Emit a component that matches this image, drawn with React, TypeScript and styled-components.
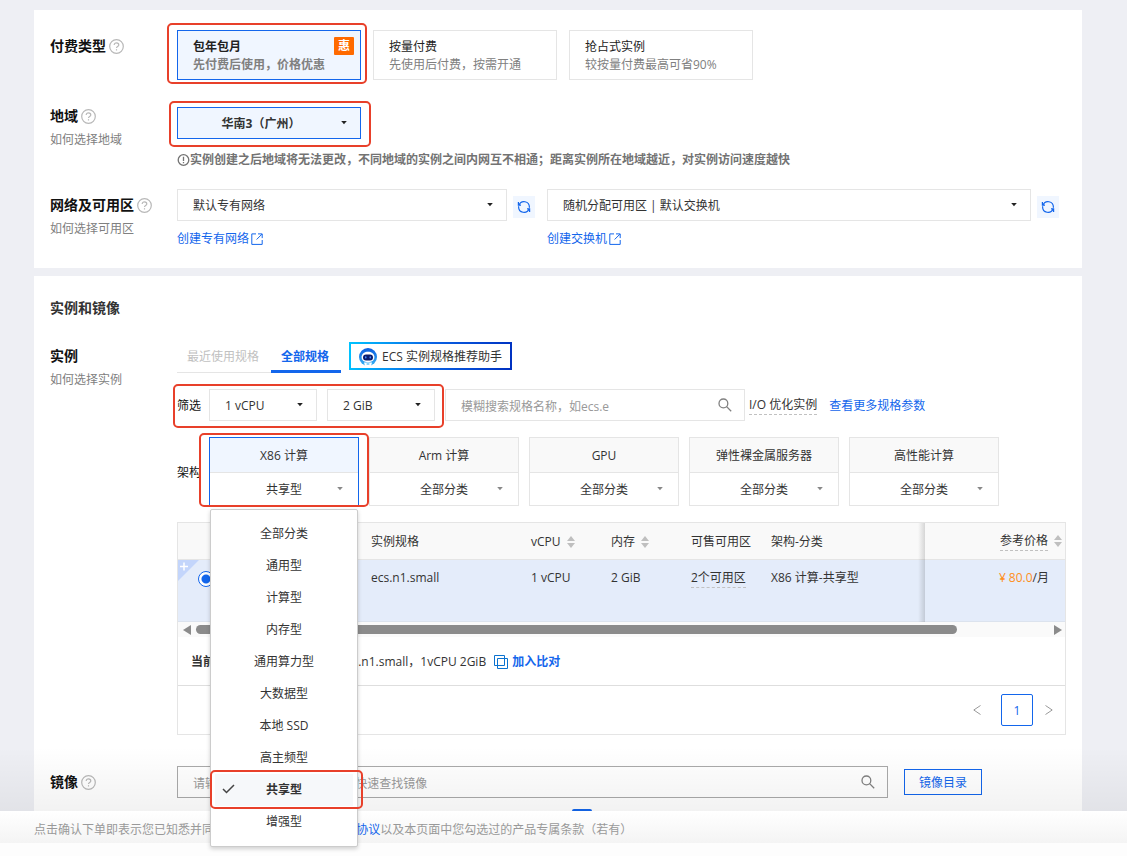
import React from "react";
import styled, { createGlobalStyle, css } from "styled-components";

const blue = "#1366ec";
const line = "#e5e5e5";
const red = "#e8402a";

const GlobalStyle = createGlobalStyle`
  *, *::before, *::after { box-sizing: border-box; }
  body {
    margin: 0;
    background: #eeeff4;
    color: #333;
    font-family: "Open Sans", "Noto Sans CJK SC", sans-serif;
    font-size: 12px;
    line-height: 20px;
  }
  button, input, select {
    font: inherit;
    color: inherit;
    border-radius: 0;
    margin: 0;
  }
  button { cursor: pointer; padding: 0; }
`;

const Page = styled.div`
  display: flex;
  flex-direction: column;
  min-height: 100vh;
`;

const Content = styled.main`
  display: flex;
  flex-direction: column;
  gap: 8px;
  padding: 10px 45px 0 34px;
`;

const Card = styled.section<{ $cut?: boolean }>`
  display: flex;
  flex-direction: column;
  gap: 20px;
  padding: ${(p) => (p.$cut ? "20px 16px 0" : "20px 16px")};
  background: #fff;
`;

const CardTitle = styled.h2`
  margin: 0;
  font-size: 14px;
  line-height: 24px;
  font-weight: 700;
`;

const Row = styled.div<{ $spaced?: boolean }>`
  display: grid;
  grid-template-columns: 127px minmax(0, 1fr);
  margin-top: ${(p) => (p.$spaced ? "11px" : "0")};
`;

const LabelCell = styled.div`
  padding-top: 6px;
`;

const LabelTitle = styled.div`
  display: flex;
  align-items: center;
  gap: 3px;
  font-size: 14px;
  font-weight: 700;
  color: #111;
`;

const LabelHint = styled.a`
  display: block;
  line-height: 28px;
  color: #808080;
  text-decoration: none;
`;

const Anchor = styled.div`
  position: relative;
  width: fit-content;
`;

const Ring = styled.span<{ $inset: string }>`
  position: absolute;
  inset: ${(p) => p.$inset};
  border: 2px solid ${red};
  border-radius: 5px;
  pointer-events: none;
  z-index: 3;
`;

const Options = styled.div`
  display: flex;
  gap: 12px;
`;

const Option = styled.button<{ $active?: boolean }>`
  position: relative;
  display: block;
  width: 184px;
  height: 50px;
  padding: 7px 15px 5px;
  text-align: left;
  line-height: 18px;
  background: #fff;
  border: 1px solid ${line};
  color: #222;
  ${(p) =>
    p.$active &&
    css`
      background: #f0f6ff;
      border-color: ${blue};
      font-weight: 700;
    `}
`;

const OptionNote = styled.span`
  display: block;
  color: #808080;
`;

const Badge = styled.span`
  position: absolute;
  top: 6px;
  right: 6px;
  width: 20px;
  border-radius: 1px;
  background: #ff6a00;
  color: #fff;
  text-align: center;
`;

const RegionField = styled.div`
  padding-top: 7px;
`;

const SelectBox = styled.div<{ $width?: number }>`
  position: relative;
  ${(p) => (p.$width ? `width: ${p.$width}px;` : "flex: 1;")}
`;

const Select = styled.select<{ $region?: boolean; $category?: boolean }>`
  appearance: none;
  display: block;
  width: 100%;
  height: 32px;
  padding: 2px 30px 0 15px;
  border: 1px solid ${line};
  background: #fff;
  outline: none;
  ${(p) =>
    p.$region &&
    css`
      padding: 2px 24px 0 8px;
      border-color: ${blue};
      background: #f0f6ff;
      font-weight: 700;
      text-align-last: center;
    `}
  ${(p) =>
    p.$category &&
    css`
      padding: 2px 0 0;
      border: 0;
      text-align-last: center;
    `}
`;

const Caret = styled.svg<{ $faint?: boolean }>`
  position: absolute;
  right: ${(p) => (p.$faint ? "14px" : "13px")};
  top: 50%;
  margin-top: -3px;
  width: 8px;
  height: 5px;
  fill: ${(p) => (p.$faint ? "#888" : "#222")};
  pointer-events: none;
`;

const Tip = styled.p`
  display: flex;
  align-items: center;
  margin: 12px 0 0;
  line-height: 18px;
  color: #737373;
  font-weight: 700;
`;

const NetworkFields = styled.div`
  display: grid;
  grid-template-columns: 358px minmax(0, 1fr);
  gap: 12px;
  padding-right: 7px;
`;

const FieldLine = styled.div`
  display: flex;
  align-items: center;
  gap: 6px;
`;

const RefreshButton = styled.button`
  display: flex;
  align-items: center;
  justify-content: center;
  width: 22px;
  height: 22px;
  margin-top: 4px;
  border: 0;
  background: #f0f6ff;
  color: ${blue};
`;

const Link = styled.a`
  color: ${blue};
  text-decoration: none;
`;

const CreateLink = styled(Link)`
  display: flex;
  align-items: center;
  gap: 2px;
  width: fit-content;
  margin-top: 9px;
  line-height: 18px;
`;

const SpecsLink = styled(Link)`
  padding-top: 2px;
`;

const TermsLink = styled(Link)`
  padding-left: 4px;
`;

const Tabs = styled.div`
  display: flex;
  height: 33px;
`;

const Tab = styled.button<{ $active?: boolean }>`
  padding: 1px 12px 0 10px;
  border: 0;
  background: none;
  color: ${(p) => (p.$active ? blue : "#c1c1c1")};
  font-weight: ${(p) => (p.$active ? 700 : 400)};
  box-shadow: inset 0 ${(p) => (p.$active ? `-3px ${blue}` : `-1px ${line}`)};
`;

const AssistantButton = styled.button`
  display: flex;
  align-items: center;
  gap: 5px;
  height: 28px;
  margin: 2px 0 0 8px;
  padding: 1px 8px 0;
  border: 2px solid transparent;
  background:
    linear-gradient(#fff, #fff) padding-box,
    linear-gradient(100deg, #00c4ff, #0a62e4 50%, #0030c0) border-box;
`;

const FilterLine = styled.div`
  display: flex;
  align-items: center;
  margin-top: 16px;
`;

const FilterGroup = styled(Anchor)`
  display: flex;
  align-items: center;
  gap: 10px;
`;

const FilterLabel = styled.span<{ $tight?: boolean }>`
  width: ${(p) => (p.$tight ? "22px" : "32px")};
  padding-top: 2px;
  color: #111;
  white-space: nowrap;
`;

const SearchBox = styled.label<{ $wide?: boolean }>`
  display: flex;
  align-items: center;
  height: 32px;
  padding: 0 12px 0 15px;
  background: #fff;
  border: 1px solid ${(p) => (p.$wide ? "#aaa" : line)};
  ${(p) => (p.$wide ? "flex: 0 1 711px;" : "width: 300px; margin: 0 4px 0 10px;")}
`;

const SearchInput = styled.input`
  flex: 1;
  min-width: 0;
  height: 30px;
  padding: 2px 0 0;
  border: 0;
  background: none;
  outline: none;
  &::placeholder { color: #999; opacity: 1; }
`;

const Dashed = styled.span<{ $right?: boolean }>`
  display: inline-block;
  line-height: 18px;
  border-bottom: 1px dashed #c1c1c1;
  margin-right: ${(p) => (p.$right ? "12px" : "0")};
`;

const ArchList = styled.div`
  display: flex;
  gap: 10px;
`;

const ArchCard = styled.div<{ $active?: boolean }>`
  position: relative;
  width: 150px;
  height: 69px;
  background: #fff;
  border: 1px solid ${(p) => (p.$active ? blue : line)};
`;

const ArchName = styled.button<{ $active?: boolean }>`
  display: block;
  width: 100%;
  height: 35px;
  padding-top: 2px;
  border: 0;
  border-bottom: 1px solid ${line};
  background: ${(p) => (p.$active ? "#f0f6ff" : "#f9f9f9")};
`;

const CategoryButton = styled.button`
  display: block;
  width: 100%;
  height: 32px;
  padding-top: 2px;
  border: 0;
  background: none;
`;

const Menu = styled.ul`
  position: absolute;
  top: 71px;
  left: 0;
  width: 148px;
  margin: 0;
  padding: 8px 0;
  list-style: none;
  background: #fff;
  border: 1px solid #ccc;
  border-radius: 2px;
  box-shadow: 0 2px 4px rgba(0, 0, 0, 0.18);
  z-index: 5;
`;

const MenuItem = styled.li<{ $active?: boolean }>`
  position: relative;
  margin: 0 4px;
  line-height: 32px;
  text-align: center;
  background: ${(p) => (p.$active ? "#f6f8fa" : "transparent")};
  font-weight: ${(p) => (p.$active ? 700 : 400)};
`;

const CheckMark = styled.svg`
  position: absolute;
  left: 7px;
  top: 9px;
  fill: none;
  stroke: #444;
`;

const TablePanel = styled.div`
  margin-top: 16px;
  border: 1px solid ${line};
`;

const Table = styled.table`
  width: 100%;
  table-layout: fixed;
  border-collapse: separate;
  border-spacing: 0;
`;

const HeadCell = styled.th`
  height: 37px;
  padding: 2px 10px 0;
  text-align: left;
  font-weight: 400;
  background: #f9f9f9;
  border-bottom: 1px solid ${line};
`;

const Cell = styled.td`
  position: relative;
  height: 62px;
  padding: 8px 10px;
  vertical-align: top;
  background: #e4ecfa;
  border-bottom: 1px solid #dce3ee;
`;

const pinned = css`
  position: relative;
  text-align: right;
  &::before {
    content: "";
    position: absolute;
    top: 0;
    bottom: -1px;
    left: -7px;
    width: 7px;
    background: linear-gradient(to right, transparent, rgba(0, 0, 0, 0.14));
  }
`;

const PinnedHead = styled(HeadCell)`
  ${pinned}
  padding: 0 3px 0 10px;
`;

const PinnedCell = styled(Cell)`
  ${pinned}
  padding-right: 16px;
`;

const HeadInner = styled.span<{ $end?: boolean }>`
  display: flex;
  align-items: center;
  gap: 6px;
  justify-content: ${(p) => (p.$end ? "flex-end" : "flex-start")};
`;

const Price = styled.span`
  color: #ff8f1a;
`;

const Corner = styled.svg`
  position: absolute;
  left: 0;
  top: 0;
`;

const Radio = styled.input`
  appearance: none;
  display: block;
  width: 16px;
  height: 16px;
  margin: 3px 0 0 10px;
  border: 1px solid ${blue};
  border-radius: 50%;
  background: radial-gradient(circle, ${blue} 4px, #fff 5px);
`;

const ScrollBar = styled.div`
  display: flex;
  align-items: center;
  height: 15px;
  background: #fafafa;
`;

const ScrollArrow = styled.span<{ $end?: boolean }>`
  display: flex;
  justify-content: center;
  width: ${(p) => (p.$end ? "14px" : "18px")};
`;

const ScrollTrack = styled.div`
  flex: 1;
`;

const ScrollThumb = styled.div`
  width: 89%;
  height: 9px;
  border-radius: 5px;
  background: #8b8b8b;
`;

const Summary = styled.div`
  display: flex;
  align-items: center;
  height: 49px;
  padding: 2px 13px 0;
  border-bottom: 1px solid #dedede;
`;

const SummaryLabel = styled.span`
  width: 149px;
  font-weight: 700;
`;

const CompareButton = styled.button`
  display: flex;
  align-items: center;
  gap: 4px;
  margin-left: 8px;
  border: 0;
  background: none;
  color: ${blue};
  font-weight: 700;
`;

const Pagination = styled.nav`
  display: flex;
  align-items: center;
  justify-content: flex-end;
  height: 48px;
`;

const PageArrow = styled.button`
  display: flex;
  align-items: center;
  justify-content: center;
  width: 32px;
  height: 32px;
  border: 0;
  background: none;
  color: #999;
`;

const PageNumber = styled.button`
  width: 32px;
  height: 32px;
  margin-left: 8px;
  padding-top: 2px;
  border: 1px solid ${blue};
  border-radius: 2px;
  background: #fff;
  color: ${blue};
`;

const ImageLine = styled.div`
  display: flex;
  align-items: center;
  gap: 16px;
`;

const OutlineButton = styled.button`
  flex: none;
  width: 78px;
  height: 26px;
  padding-top: 2px;
  border: 1px solid ${blue};
  background: #fff;
  color: ${blue};
`;

const NextTabs = styled.div`
  display: flex;
  justify-content: center;
  width: 100%;
  max-width: 810px;
  margin-top: 11px;
`;

const TabIndicator = styled.span`
  width: 20px;
  height: 2px;
  border-radius: 2px 2px 0 0;
  background: ${blue};
`;

const Footer = styled.footer`
  position: relative;
  flex: 1;
  padding-bottom: 13px;
  background: #fdfdfd;
  z-index: 1;
  &::before {
    content: "";
    position: absolute;
    left: 0;
    right: 0;
    bottom: 100%;
    height: 64px;
    background: linear-gradient(transparent, rgba(0, 0, 0, 0.05));
    pointer-events: none;
  }
`;

const Agreement = styled.p`
  margin: 0;
  padding: 5px 34px 0;
  line-height: 27px;
  color: #999;
  background: linear-gradient(#fff, #f4f4f4);
`;

const HelpIcon = () => (
  <svg width="15" height="15" viewBox="0 0 15 15" fill="none" stroke="#b8b8b8" strokeWidth="1.2" aria-hidden="true">
    <circle cx="7.5" cy="7.5" r="6.8" />
    <path d="M5.2 6c0-1.300 1-2.200 2.300-2.200s2.300.9 2.300 2.100c0 1.600-2.300 1.700-2.300 3.200" />
    <path d="M7.5 10.200v1.300" />
  </svg>
);

const InfoIcon = () => (
  <svg width="13" height="13" viewBox="0 0 13 13" fill="none" stroke="#737373" strokeWidth="1.3" aria-hidden="true">
    <circle cx="6.5" cy="6" r="5.3" />
    <path d="M6.5 2.800v4.200M6.5 8v1.300" />
  </svg>
);

const ExternalIcon = () => (
  <svg width="12" height="12" viewBox="0 0 12 12" fill="none" stroke={blue} aria-hidden="true">
    <path d="M5 .9H.8v10.5h10.4V7" />
    <path d="M7 .9h4.2v4.2M11 1.1 5.6 6.5" />
  </svg>
);

const RefreshIcon = () => (
  <svg width="14" height="14" viewBox="0 0 14 14" fill="none" stroke="currentColor" strokeWidth="1.2" aria-hidden="true">
    <path d="M2 5A5.400 5.400 0 0 1 12.400 7v.8M12 9A5.400 5.400 0 0 1 1.600 7v-.8" />
    <path d="M1.400 2v3.200h2.600M12.600 12V8.800H10" />
  </svg>
);

const SearchIcon = () => (
  <svg width="14" height="14" viewBox="0 0 14 14" fill="none" stroke="#808080" strokeWidth="1.3" aria-hidden="true">
    <circle cx="5.4" cy="5.4" r="4.4" />
    <path d="m8.6 8.6 4.6 4.6" />
  </svg>
);

const RobotIcon = () => (
  <svg width="18" height="18" viewBox="0 0 18 18" aria-hidden="true">
    <defs>
      <linearGradient id="robotRing" x1="0" y1="0" x2="0" y2="1">
        <stop offset="0" stopColor="#0a5be0" />
        <stop offset="1" stopColor="#39b6f5" />
      </linearGradient>
    </defs>
    <circle cx="9" cy="9" r="9" fill="url(#robotRing)" />
    <path d="M2.6 8.6C3 5.4 5.7 3.8 9 3.8s6 1.6 6.4 4.8c.3 3.6-2.2 5.6-6.4 5.6s-6.7-2-6.4-5.6Z" fill="#fff" />
    <path d="M5 14.600h8l-1 3.400H6z" fill="#fff" />
    <rect x="4" y="6.400" width="10" height="6" rx="3" fill="#0a1c6e" />
    <rect x="6" y="8.200" width="1.500" height="2.300" rx=".7" fill="#3f8cff" />
    <rect x="10.500" y="8.200" width="1.500" height="2.300" rx=".7" fill="#3f8cff" />
    <path d="M7.600 16h2.800" stroke="#39b6f5" strokeWidth="1.200" />
  </svg>
);

const SortIcon = () => (
  <svg width="8" height="12" viewBox="0 0 8 12" fill="#bfbfbf" aria-hidden="true">
    <path d="M4 0 8 5H0zM4 12 0 7h8z" />
  </svg>
);

const CompareIcon = () => (
  <svg width="14" height="14" viewBox="0 0 14 14" fill="none" stroke="#0a72d0" aria-hidden="true">
    <path d="M.5.5h10v10H.5zM3.5 3.5h10v10h-10z" />
  </svg>
);

const Down = ({ faint }: { faint?: boolean }) => (
  <Caret $faint={faint} viewBox="0 0 8 5" aria-hidden="true">
    <path d="M1.2 1h5.600L4 4.200z" />
  </Caret>
);

type LabelProps = { title: string; hint?: string; help?: boolean };
const Label = ({ title, hint, help }: LabelProps) => (
  <LabelCell>
    <LabelTitle>
      {title}
      {help && <HelpIcon />}
    </LabelTitle>
    {hint && <LabelHint href="#help">{hint}</LabelHint>}
  </LabelCell>
);

type PickerProps = { label: string; value: string; width?: number; region?: boolean };
const Picker = ({ label, value, width, region }: PickerProps) => (
  <SelectBox $width={width}>
    <Select aria-label={label} $region={region} defaultValue={value}>
      <option>{value}</option>
    </Select>
    <Down />
  </SelectBox>
);

const architectures = ["Arm 计算", "GPU", "弹性裸金属服务器", "高性能计算"];
const categories = ["全部分类", "通用型", "计算型", "内存型", "通用算力型", "大数据型", "本地 SSD", "高主频型", "共享型", "增强型"];

export default function App() {
  return (
    <Page>
      <GlobalStyle />
      <Content>
        <Card>
          <Row>
            <Label title="付费类型" help />
            <Options>
              <Anchor>
                <Option type="button" $active aria-pressed="true">
                  包年包月
                  <OptionNote>先付费后使用，价格优惠</OptionNote>
                  <Badge>惠</Badge>
                </Option>
                <Ring $inset="-7px -6px -4px -10px" />
              </Anchor>
              <Option type="button">
                按量付费
                <OptionNote>先使用后付费，按需开通</OptionNote>
              </Option>
              <Option type="button">
                抢占式实例
                <OptionNote>较按量付费最高可省90%</OptionNote>
              </Option>
            </Options>
          </Row>
          <Row>
            <Label title="地域" hint="如何选择地域" help />
            <RegionField>
              <Anchor>
                <Picker label="地域" value="华南3（广州）" width={184} region />
                <Ring $inset="-6px -10px -8px -8px" />
              </Anchor>
              <Tip>
                <InfoIcon />
                实例创建之后地域将无法更改，不同地域的实例之间内网互不相通；距离实例所在地域越近，对实例访问速度越快
              </Tip>
            </RegionField>
          </Row>
          <Row>
            <Label title="网络及可用区" hint="如何选择可用区" help />
            <NetworkFields>
              <div>
                <FieldLine>
                  <Picker label="专有网络" value="默认专有网络" />
                  <RefreshButton type="button" aria-label="刷新专有网络"><RefreshIcon /></RefreshButton>
                </FieldLine>
                <CreateLink href="#vpc">创建专有网络<ExternalIcon /></CreateLink>
              </div>
              <div>
                <FieldLine>
                  <Picker label="交换机" value="随机分配可用区 | 默认交换机" />
                  <RefreshButton type="button" aria-label="刷新交换机"><RefreshIcon /></RefreshButton>
                </FieldLine>
                <CreateLink href="#vswitch">创建交换机<ExternalIcon /></CreateLink>
              </div>
            </NetworkFields>
          </Row>
        </Card>

        <Card $cut>
          <CardTitle>实例和镜像</CardTitle>
          <Row>
            <Label title="实例" hint="如何选择实例" />
            <div>
              <Tabs>
                <Tab type="button">最近使用规格</Tab>
                <Tab type="button" $active>全部规格</Tab>
                <AssistantButton type="button"><RobotIcon />ECS 实例规格推荐助手</AssistantButton>
              </Tabs>
              <FilterLine>
                <FilterGroup>
                  <FilterLabel $tight>筛选</FilterLabel>
                  <Picker label="vCPU" value="1 vCPU" width={108} />
                  <Picker label="内存" value="2 GiB" width={108} />
                  <Ring $inset="-5px -9px -7px -4px" />
                </FilterGroup>
                <SearchBox>
                  <SearchInput type="text" aria-label="搜索规格" placeholder="模糊搜索规格名称，如ecs.e" />
                  <SearchIcon />
                </SearchBox>
                <Dashed $right>I/O 优化实例</Dashed>
                <SpecsLink href="#specs">查看更多规格参数</SpecsLink>
              </FilterLine>
              <FilterLine>
                <FilterLabel>架构</FilterLabel>
                <ArchList>
                  <ArchCard $active>
                    <ArchName type="button" $active>X86 计算</ArchName>
                    <SelectBox>
                      <CategoryButton type="button" aria-haspopup="listbox" aria-expanded="true">共享型</CategoryButton>
                      <Down faint />
                    </SelectBox>
                    <Ring $inset="-5px -11px -2px -11px" />
                    <Menu role="listbox" aria-label="X86 计算分类">
                      {categories.map((name) => {
                        const active = name === "共享型";
                        return (
                          <MenuItem key={name} role="option" aria-selected={active} $active={active}>
                            {active && (
                              <CheckMark width="13" height="12" viewBox="0 0 13 12" strokeWidth="1.5" aria-hidden="true">
                                <path d="m1 6 3.5 3.5L12 2" />
                              </CheckMark>
                            )}
                            {name}
                            {active && <Ring $inset="-4px -10px -3px -5px" />}
                          </MenuItem>
                        );
                      })}
                    </Menu>
                  </ArchCard>
                  {architectures.map((name) => (
                    <ArchCard key={name}>
                      <ArchName type="button">{name}</ArchName>
                      <SelectBox>
                        <Select aria-label={`${name}分类`} $category defaultValue="全部分类">
                          <option>全部分类</option>
                        </Select>
                        <Down faint />
                      </SelectBox>
                    </ArchCard>
                  ))}
                </ArchList>
              </FilterLine>
              <TablePanel>
                <Table>
                  <colgroup>
                    <col width="183" />
                    <col width="160" />
                    <col width="80" />
                    <col width="80" />
                    <col width="80" />
                    <col />
                    <col width="140" />
                  </colgroup>
                  <thead>
                    <tr>
                      <HeadCell />
                      <HeadCell>实例规格</HeadCell>
                      <HeadCell><HeadInner>vCPU<SortIcon /></HeadInner></HeadCell>
                      <HeadCell><HeadInner>内存<SortIcon /></HeadInner></HeadCell>
                      <HeadCell>可售可用区</HeadCell>
                      <HeadCell>架构-分类</HeadCell>
                      <PinnedHead><HeadInner $end><Dashed>参考价格</Dashed><SortIcon /></HeadInner></PinnedHead>
                    </tr>
                  </thead>
                  <tbody>
                    <tr>
                      <Cell>
                        <Corner width="21" height="21" viewBox="0 0 21 21" aria-hidden="true">
                          <path d="M0 0h21L0 21z" fill="#c3d5fb" />
                          <path d="M2 6.5h8M6 2.5v8" stroke="#fff" strokeWidth="1.5" />
                        </Corner>
                        <Radio type="radio" name="spec" aria-label="ecs.n1.small" defaultChecked />
                      </Cell>
                      <Cell>ecs.n1.small</Cell>
                      <Cell>1 vCPU</Cell>
                      <Cell>2 GiB</Cell>
                      <Cell><Dashed>2个可用区</Dashed></Cell>
                      <Cell>X86 计算-共享型</Cell>
                      <PinnedCell><Price>¥ 80.0</Price>/月</PinnedCell>
                    </tr>
                  </tbody>
                </Table>
                <ScrollBar>
                  <ScrollArrow>
                    <svg width="8" height="10" viewBox="0 0 8 10" fill="#8b8b8b" aria-hidden="true"><path d="M8 0v10L0 5z" /></svg>
                  </ScrollArrow>
                  <ScrollTrack><ScrollThumb /></ScrollTrack>
                  <ScrollArrow $end>
                    <svg width="8" height="10" viewBox="0 0 8 10" fill="#8b8b8b" aria-hidden="true"><path d="M0 0v10l8-5z" /></svg>
                  </ScrollArrow>
                </ScrollBar>
                <Summary>
                  <SummaryLabel>当前选择实例</SummaryLabel>
                  ecs.n1.small，1vCPU 2GiB
                  <CompareButton type="button"><CompareIcon />加入比对</CompareButton>
                </Summary>
                <Pagination aria-label="分页">
                  <PageArrow type="button" aria-label="上一页">
                    <svg width="8" height="10" viewBox="0 0 8 10" fill="none" stroke="currentColor" aria-hidden="true"><path d="M7.5.5.8 5l6.7 4.5" /></svg>
                  </PageArrow>
                  <PageNumber type="button">1</PageNumber>
                  <PageArrow type="button" aria-label="下一页">
                    <svg width="8" height="10" viewBox="0 0 8 10" fill="none" stroke="currentColor" aria-hidden="true"><path d="M.5.5 7.2 5 .5 9.5" /></svg>
                  </PageArrow>
                </Pagination>
              </TablePanel>
            </div>
          </Row>
          <Row $spaced>
            <Label title="镜像" help />
            <div>
              <ImageLine>
                <SearchBox $wide>
                  <SearchInput type="text" aria-label="搜索镜像" placeholder="请输入镜像名称、镜像 ID 信息快速查找镜像" />
                  <SearchIcon />
                </SearchBox>
                <OutlineButton type="button">镜像目录</OutlineButton>
              </ImageLine>
              <NextTabs><TabIndicator /></NextTabs>
            </div>
          </Row>
        </Card>
      </Content>
      <Footer>
        <Agreement>
          点击确认下单即表示您已知悉并同意 <TermsLink href="#terms">云服务器 ECS 产品服务协议</TermsLink>以及本页面中您勾选过的产品专属条款（若有）
        </Agreement>
      </Footer>
    </Page>
  );
}
